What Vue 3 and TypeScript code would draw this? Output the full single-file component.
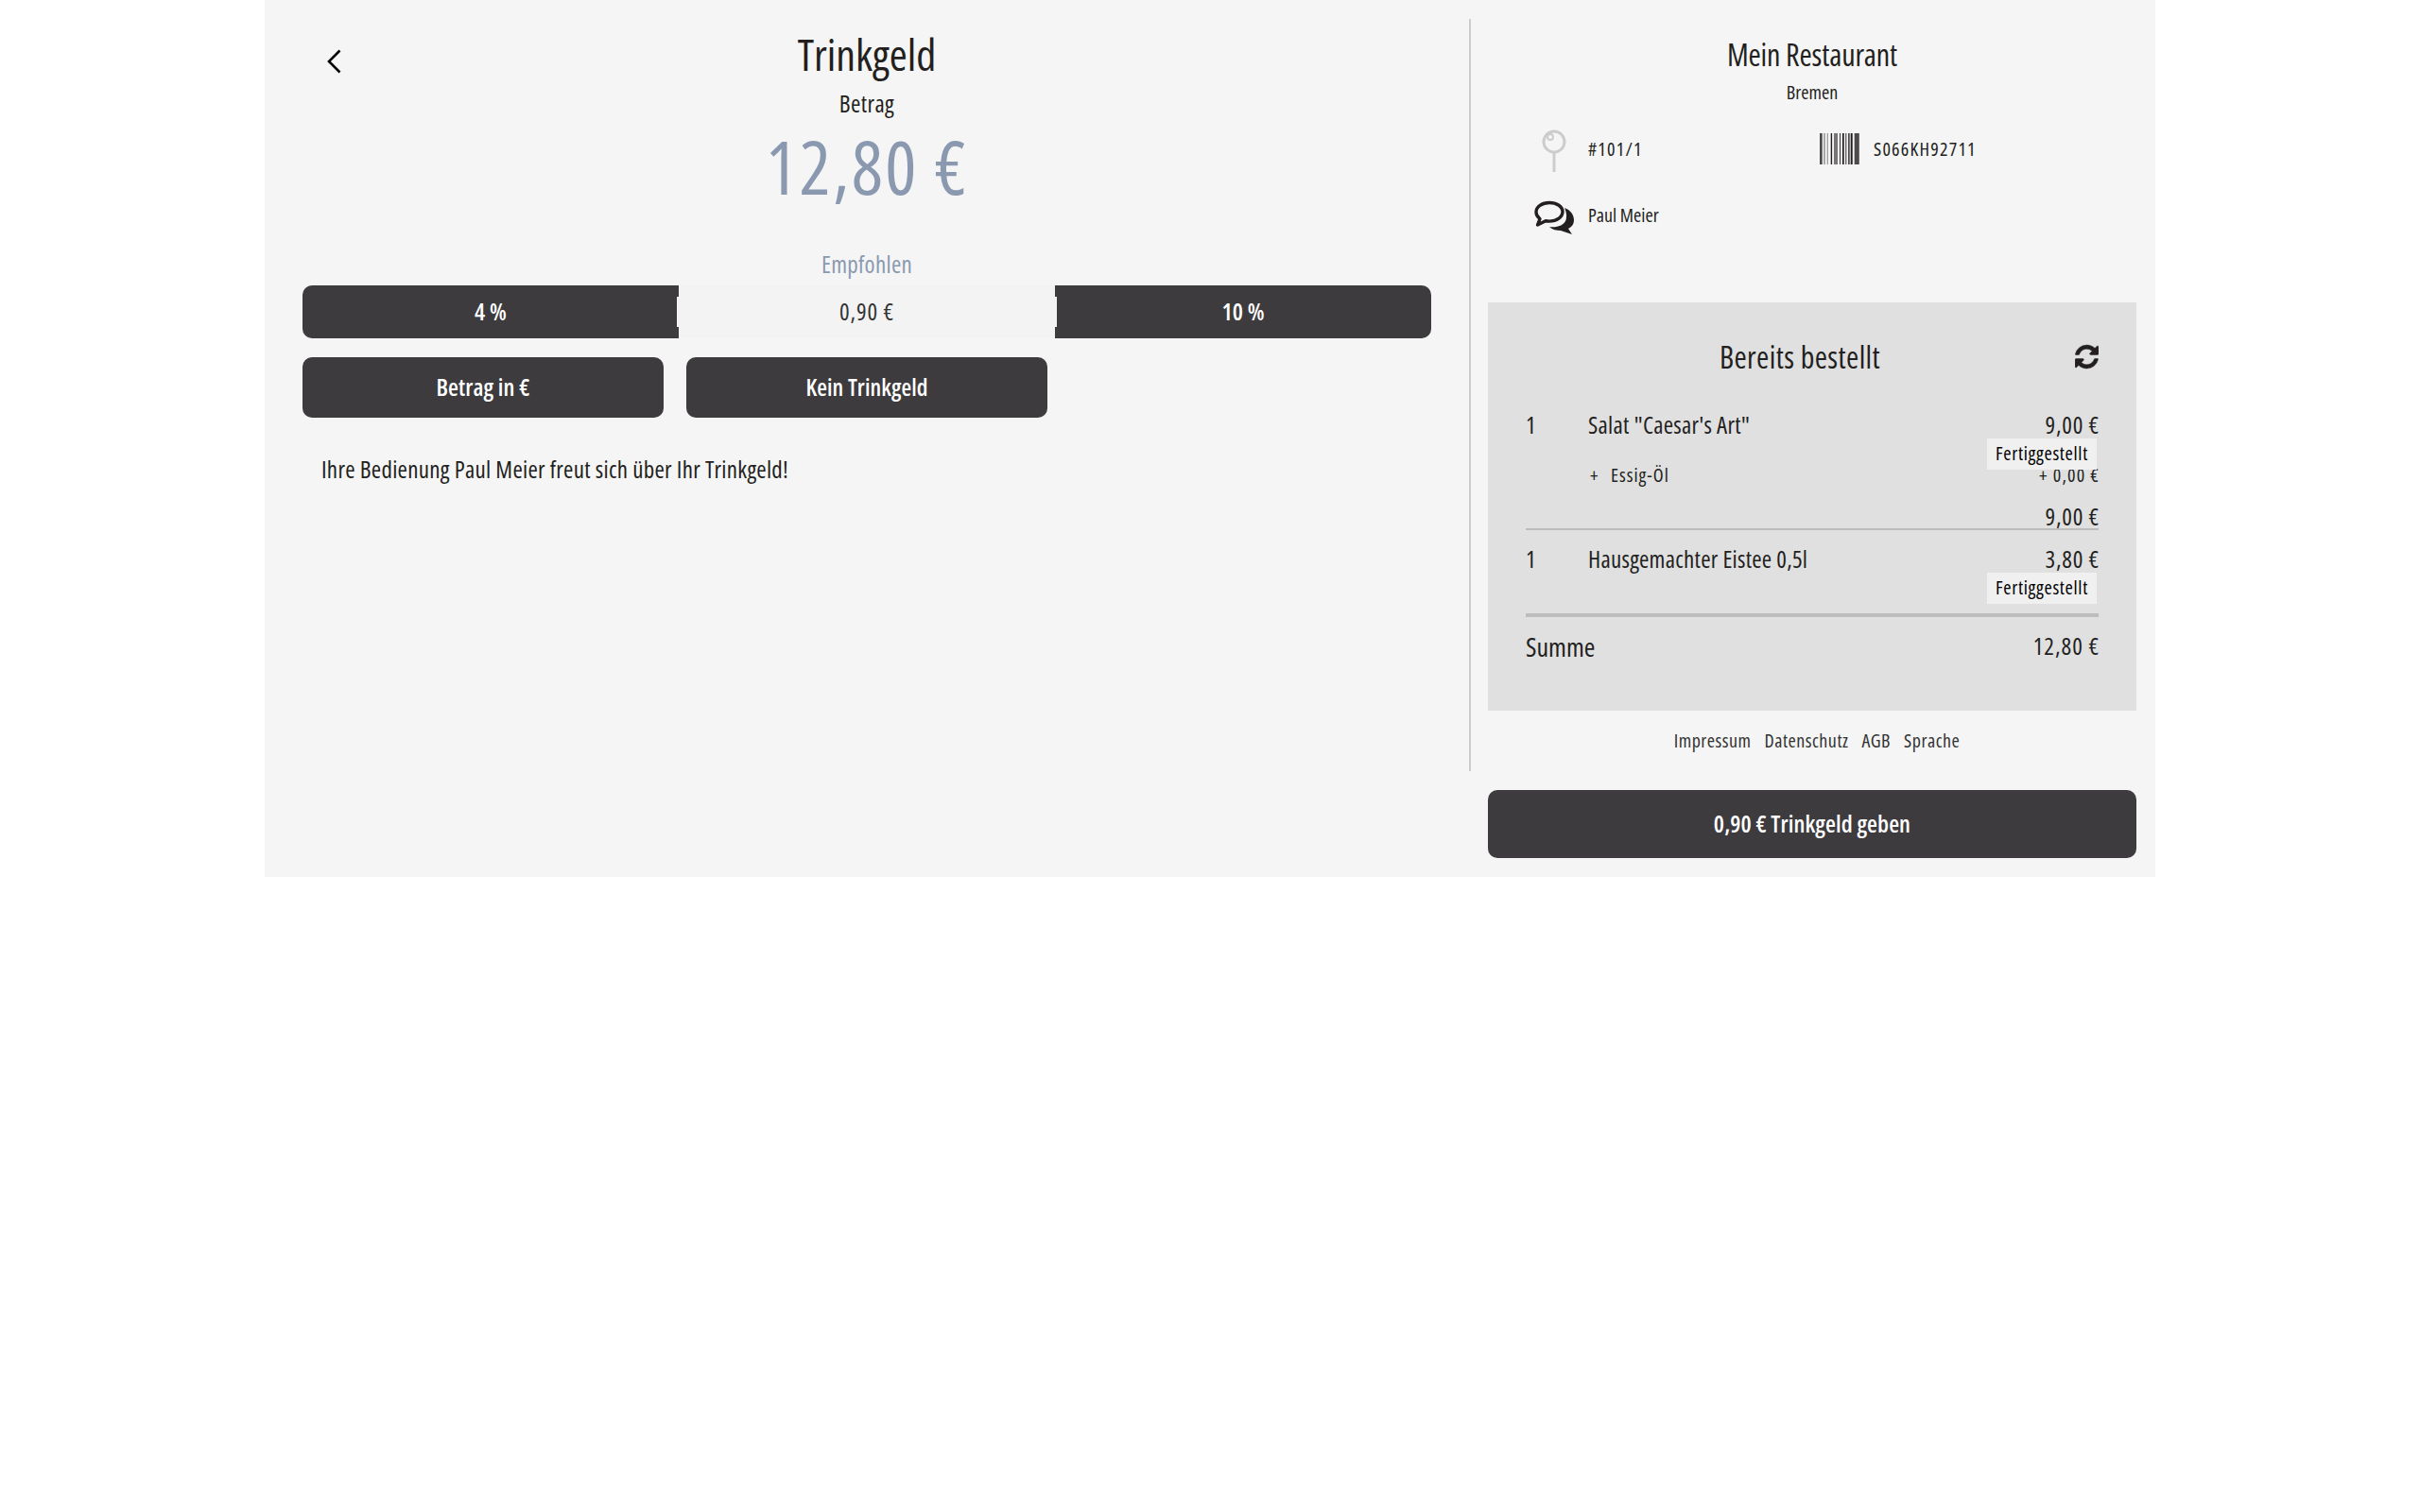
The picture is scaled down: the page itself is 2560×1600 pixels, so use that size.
<script setup lang="ts">
interface Bar { x: number; w: number; o: number }
const bars: Bar[] = [
  { x: 0, w: 2.7, o: 0.8 }, { x: 4.3, w: 1.4, o: 0.5 }, { x: 7.7, w: 1.3, o: 0.4 },
  { x: 11.7, w: 1.4, o: 1 }, { x: 15, w: 4, o: 0.6 }, { x: 21, w: 1, o: 0.9 },
  { x: 24, w: 1.7, o: 1 }, { x: 27.3, w: 1, o: 0.9 }, { x: 30, w: 1.7, o: 0.8 },
  { x: 32.7, w: 2, o: 1 }, { x: 36.7, w: 4.3, o: 0.8 }, { x: 41.3, w: 0.7, o: 0.9 },
]
</script>

<template>
  <div class="panel">
    <main class="left">
      <header class="head">
        <button class="back" aria-label="Zurück">
          <svg width="15" height="26" viewBox="0 0 15 26"><path d="M13.5 1.5 2 13l11.500 11.500" fill="none" stroke="#000" stroke-width="2.600" /></svg>
        </button>
        <h1>Trinkgeld</h1>
        <div class="betrag">Betrag</div>
        <div class="amount">12,80 €</div>
      </header>
      <div class="emp">Empfohlen</div>
      <div class="tips">
        <button class="btn seg first">4 %</button>
        <div class="mid"><span class="midin">0,90 €</span></div>
        <button class="btn seg last">10 %</button>
      </div>
      <div class="row2">
        <button class="btn big">Betrag in €</button>
        <button class="btn big kein">Kein Trinkgeld</button>
      </div>
      <p class="note">Ihre Bedienung <span class="hl">Paul Meier</span> freut sich über Ihr Trinkgeld!</p>
    </main>

    <aside class="right">
      <div class="rest">
        <h2>Mein Restaurant</h2>
        <div class="city">Bremen</div>
        <div class="info">
          <div class="cell c1">
            <svg class="ic pin" width="44" height="46" viewBox="0 0 44 46">
              <circle cx="22" cy="13" r="11" fill="none" stroke="#ccc" stroke-width="3" />
              <circle cx="18" cy="8" r="3" fill="none" stroke="#ccc" stroke-width="2" />
              <path d="M22 24.500V45" stroke="#ccc" stroke-width="3" />
            </svg>
            <span class="code">#101/1</span>
          </div>
          <div class="cell c2">
            <svg width="42" height="33" viewBox="0 0 42 33" class="bar">
              <rect v-for="(b, i) in bars" :key="i" :x="b.x" y="0" :width="b.w" height="33" fill="#231f20" :opacity="b.o" />
            </svg>
            <span class="code">S066KH92711</span>
          </div>
        </div>
        <div class="cell c3">
          <svg class="ic chat" width="44" height="36" viewBox="0 0 44 36">
            <path d="M33 8c6 2 10 7 10 13 0 4-2 7-6 9l4 6-12-4c-4 0-9-1-12-4 8 1 14-1 17-6 2-4 1-10-1-14Z" fill="#231f20" />
            <path d="M17 2.500C9 2.500 3 7 3 12.500c0 3 2 5.500 4 7l-2.500 6.500 8.500-4.200c1.500.2 3 .3 4 .3 8 0 14-4.500 14-10S25 2.500 17 2.500Z" fill="#f5f5f5" stroke="#231f20" stroke-width="3.400" stroke-linejoin="round" />
          </svg>
          <span>Paul Meier</span>
        </div>
      </div>

      <section class="box">
        <div class="boxhead">
          <h3>Bereits bestellt</h3>
          <svg width="25" height="29" viewBox="0 0 1536 1792"><path fill="#231f20" stroke="#231f20" stroke-width="30" d="M1511 1056q0 5-1 7-64 268-268 434.5t-478 166.5q-146 0-282.5-55t-243.5-157l-129 129q-19 19-45 19t-45-19-19-45v-448q0-26 19-45t45-19h448q26 0 45 19t19 45-19 45l-137 137q71 66 161 102t187 36q134 0 250-65t186-179q11-17 53-117 8-23 30-23h192q13 0 22.5 9.5t9.5 22.5zm25-800v448q0 26-19 45t-45 19h-448q-26 0-45-19t-19-45 19-45l138-138q-148-137-349-137-134 0-250 65t-186 179q-11 17-53 117-8 23-30 23h-199q-13 0-22.5-9.5t-9.5-22.5v-7q65-268 270-434.5t480-166.5q146 0 284 55.5t245 156.5l130-129q19-19 45-19t45 19 19 45z"/></svg>
        </div>
        <div class="item i1">
          <div class="line"><span class="qty">1</span><span class="name">Salat "Caesar's Art"</span><span class="price">9,00 €</span></div>
          <div class="chip">Fertiggestellt</div>
          <div class="line sub"><span class="qty"></span><span class="name"><span class="plus">+</span>Essig-Öl</span><span class="price">+ 0,00 €</span></div>
          <div class="line tot"><span class="price">9,00 €</span></div>
        </div>
        <div class="item i2">
          <div class="line"><span class="qty">1</span><span class="name">Hausgemachter Eistee 0,5l</span><span class="price">3,80 €</span></div>
          <div class="chip">Fertiggestellt</div>
        </div>
        <div class="sum"><span class="sumL">Summe</span><span class="sumR">12,80 €</span></div>
      </section>

      <nav class="foot"><span>Impressum</span><span>Datenschutz</span><span>AGB</span><span>Sprache</span></nav>
      <button class="btn cta">0,90 € Trinkgeld geben</button>
    </aside>
  </div>
</template>

<style>
body { background: #fff; }
</style>

<style scoped>
* { box-sizing: border-box; }
.panel {
  width: 2000px; height: 928px; margin: 0 auto; background: #f5f5f5; display: flex;
  font-family: "Open Sans", "Liberation Sans", sans-serif; font-stretch: 75%; color: #231f20;
}
button { font: inherit; font-stretch: inherit; border: 0; padding: 0; background: none; }
h1, h2, h3, p { margin: 0; font-weight: 400; }
.left { width: 1274px; padding: 0 40px; }
.head { position: relative; text-align: center; height: 256px; padding-top: 32px; }
.back { position: absolute; left: 26px; top: 52px; width: 15px; height: 26px; }
.back svg { display: block; }
h1 { font-size: 46px; line-height: 50px; }
.betrag { font-size: 25px; line-height: 30px; margin-top: 12px; letter-spacing: 0.4px; }
.amount { font-size: 78px; line-height: 84px; color: #8a99b0; margin-top: 10px; font-weight: 500; letter-spacing: 2.4px; }
.emp { text-align: center; color: #8a99b0; font-size: 25px; line-height: 30px; margin-top: 8px; margin-bottom: 8px; letter-spacing: 0.3px; }
.tips { display: flex; height: 56px; }
.btn { background: #3d3b3e; color: #fff; font-weight: 600; font-size: 25px; letter-spacing: 0.1px; display: flex; align-items: center; justify-content: center; padding-bottom: 2px; }
.seg { width: 398px; }
.first { border-radius: 10px 0 0 10px; }
.last { border-radius: 0 10px 10px 0; }
.mid { width: 398px; background: #f3f3f3; display: flex; align-items: center; }
.midin { margin: 0 -2px; width: 402px; height: 32px; background: #f3f3f3; text-align: center; line-height: 30px; font-size: 25px; position: relative; letter-spacing: 0.9px; color: #333; }
.row2 { display: flex; gap: 24px; margin-top: 20px; }
.big { width: 382px; height: 64px; border-radius: 10px; }
.kein { font-size: 24.5px; }
.note { font-size: 25px; line-height: 32px; padding: 38px 20px 0; letter-spacing: 0.28px; }
.hl { font-weight: 500; }
.right { flex: 1; position: relative; padding: 0 20px; }
.right::before { content: ""; position: absolute; left: 0; top: 20px; width: 2px; height: 796px; background: #ccc; }
.rest { height: 320px; padding-top: 40px; text-align: center; }
h2 { font-size: 32px; line-height: 36px; letter-spacing: -0.15px; }
.city { font-size: 20px; line-height: 24px; margin-top: 10px; }
.info { display: flex; margin-top: 24px; }
.cell { display: flex; align-items: center; font-size: 20px; text-align: left; }
.code { letter-spacing: 1.2px; }
.c1 { width: 351px; height: 46px; padding-left: 48px; }
.c1 .ic { margin-right: 14px; }
.pin { margin-top: 5px; }
.c2 { height: 46px; }
.bar { margin-right: 15px; }
.c3 { margin-top: 29px; padding-left: 48px; height: 36px; }
.c3 .ic { margin-right: 14px; }
.chat { margin-top: 6px; }
.box { background: #e0e0e0; height: 432px; padding: 0 40px; }
.boxhead { display: flex; justify-content: flex-end; align-items: center; height: 115px; position: relative; }
h3 { position: absolute; left: 0; right: 26px; text-align: center; font-size: 32px; letter-spacing: 0.4px; }
.item { font-size: 25px; letter-spacing: 0.25px; }
.line { display: flex; line-height: 32px; }
.line:first-child { margin-top: -2px; }
.qty { width: 66px; }
.name { flex: 1; }
.price { letter-spacing: 0.8px; margin-right: -1px; }
.chip { width: 116px; height: 33px; margin-left: auto; margin-right: 2px; margin-top: -1px; background: #f0f0f0; text-align: center; line-height: 32px; font-size: 20px; letter-spacing: 0.7px; color: #000; position: relative; z-index: 1; }
.sub { font-size: 20px; line-height: 24px; margin-top: -6px; letter-spacing: 1px; }
.sub .price { letter-spacing: 1.2px; }
.plus { display: inline-block; width: 24px; padding-left: 2px; }
.tot { justify-content: flex-end; margin-top: 15px; }
.i1 { border-bottom: 2px solid #bdbdbd; height: 128px; }
.i2 { border-bottom: 4px solid #bdbdbd; padding-top: 16px; height: 92px; }
.sum { display: flex; justify-content: space-between; align-items: center; margin-top: 15px; line-height: 32px; font-size: 25px; }
.sumL { font-size: 28px; }
.sumR { letter-spacing: 1px; margin-right: -1px; margin-top: -2px; }
.foot { display: flex; justify-content: center; gap: 14px; font-size: 20px; height: 84px; padding: 18px 0 0 10px; color: #333; letter-spacing: 0.5px; }
.cta { width: 686px; height: 72px; border-radius: 10px; font-size: 25px; }
</style>
